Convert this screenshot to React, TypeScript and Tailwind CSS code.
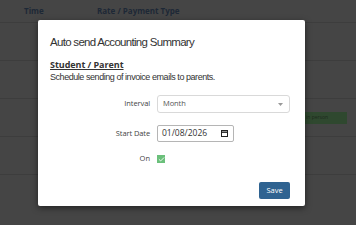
import { Check } from "lucide-react";

const rows = [0, 1, 2, 3];

function BackgroundTable() {
  return (
    <div className="h-[225px] w-full bg-[#454545] font-['Open_Sans',sans-serif]">
      <div className="flex h-[23px] items-center border-b border-[#3d3d3d] text-[8px] font-bold text-[#1d2836]">
        <div className="w-[97px] pl-[24px]">Time</div>
        <div>Rate / Payment Type</div>
      </div>
      {rows.map((r) => (
        <div
          key={r}
          className="flex h-[38px] items-center justify-end border-b border-[#3d3d3d] pr-[9px]"
        >
          {r === 2 && (
            <div className="flex h-[12px] w-[42px] items-center bg-[#2f482f] pl-[1px] text-[5px] text-[#1d2a1d]">
              in person
            </div>
          )}
        </div>
      ))}
    </div>
  );
}

export default function App() {
  return (
    <div className="relative h-[225px] w-[356px] overflow-hidden">
      <BackgroundTable />

      <div className="absolute left-[38px] top-[20px] flex h-[186px] w-[267px] flex-col rounded-[2px] bg-white pl-[12px] pr-[15px] pt-[14px] shadow-[0_2px_6px_rgba(0,0,0,0.5)]">
        <div className="font-['Liberation_Sans',Arial,sans-serif] text-[11.5px] leading-[16px] tracking-[-0.7px] text-[#333]">
          Auto send Accounting Summary
        </div>

        <div className="mt-[9px] font-['Open_Sans',sans-serif] text-[9px] font-bold leading-[12px] tracking-[-0.05px] text-[#333] underline">
          Student / Parent
        </div>
        <div className="font-['Liberation_Sans',Arial,sans-serif] text-[9px] leading-[12px] tracking-[-0.45px] text-[#333]">
          Schedule sending of invoice emails to parents.
        </div>

        <div className="mt-[12px] flex items-center">
          <div className="w-[100px] text-right font-['Open_Sans',sans-serif] text-[7.5px] tracking-[-0.1px] text-[#444]">
            Interval
          </div>
          <div className="ml-[7px] flex h-[18px] w-[133px] items-center justify-between rounded-[3px] border border-[#d9d9d9] pl-[5px] pr-[6px] font-['Open_Sans',sans-serif] text-[7.5px] tracking-[-0.1px] text-[#555]">
            <span>Month</span>
            <svg width="5" height="3" viewBox="0 0 5 3">
              <path d="M0 0 L5 0 L2.5 3 Z" fill="#999" />
            </svg>
          </div>
        </div>

        <div className="mt-[12px] flex items-center">
          <div className="w-[100px] text-right font-['Open_Sans',sans-serif] text-[7.5px] tracking-[-0.1px] text-[#444]">
            Start Date
          </div>
          <div className="ml-[7px] flex h-[17px] w-[77px] items-center justify-between rounded-[2px] border border-[#b5b5b5] pl-[4px] pr-[5px] font-['Open_Sans',sans-serif] text-[8.5px] text-[#333]">
            <span>01/08/2026</span>
            <svg width="7" height="7" viewBox="0 0 7 7" fill="none" stroke="#222" strokeWidth="1">
              <rect x="0.5" y="0.5" width="6" height="6" />
              <path d="M0.5 2.2 H6.5" strokeWidth="1.4" />
            </svg>
          </div>
        </div>

        <div className="mt-[12px] flex h-[10px] items-center">
          <div className="w-[100px] text-right font-['Open_Sans',sans-serif] text-[7.5px] text-[#444]">
            On
          </div>
          <div className="ml-[7px] flex h-[8px] w-[8px] items-center justify-center bg-[#6bc07b]">
            <Check className="h-[7px] w-[7px] text-white" strokeWidth={3} />
          </div>
        </div>

        <div className="mt-[18px] flex justify-end">
          <button className="h-[17px] w-[31px] rounded-[2px] bg-[#2f6391] font-['Open_Sans',sans-serif] text-[7.5px] text-white">
            Save
          </button>
        </div>
      </div>
    </div>
  );
}
